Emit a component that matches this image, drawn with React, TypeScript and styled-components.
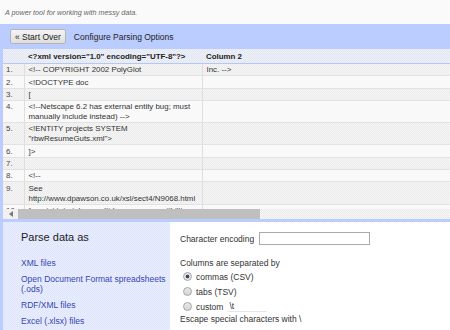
import styled, { createGlobalStyle } from "styled-components";

const rows: [string, string][] = [
  ["<!-- COPYRIGHT 2002 PolyGlot", "Inc. -->"],
  ["<!DOCTYPE doc", ""],
  ["[", ""],
  ["<!--Netscape 6.2 has external entity bug; must manually include instead) -->", ""],
  ['<!ENTITY projects SYSTEM "rbwResumeGuts.xml">', ""],
  ["]>", ""],
  ["", ""],
  ["<!--", ""],
  ["See http://www.dpawson.co.uk/xsl/sect4/N9068.html", ""],
  ["for mini tutorial on multi-browser compatibility", ""],
];

const formats = [
  "XML files",
  "Open Document Format spreadsheets (.ods)",
  "RDF/XML files",
  "Excel (.xlsx) files",
];

const App = () => {
  return (
    <>
      <GlobalStyle />
      <Page>
        <Tagline>A power tool for working with messy data.</Tagline>
        <Frame>
          <Toolbar>
            <Button>« Start Over</Button>
            <ToolbarTitle>Configure Parsing Options</ToolbarTitle>
          </Toolbar>
          <DataView>
            <Table>
              <colgroup>
                <col style={{ width: 21 }} />
                <col style={{ width: 178 }} />
                <col />
              </colgroup>
              <thead>
                <tr>
                  <HeadCell />
                  <HeadCell>{'<?xml version="1.0" encoding="UTF-8"?>'}</HeadCell>
                  <HeadCell>Column 2</HeadCell>
                </tr>
              </thead>
              <tbody>
                {rows.map((r, i) => (
                  <Row key={i} $odd={i % 2 === 0}>
                    <IndexCell>{i + 1}.</IndexCell>
                    <Cell>{r[0]}</Cell>
                    <Cell>{r[1]}</Cell>
                  </Row>
                ))}
              </tbody>
            </Table>
          </DataView>
          <ScrollBar>
            <ScrollArrow>
              <svg width="4" height="6" viewBox="0 0 4 6">
                <path d="M4 0 L0 3 L4 6 Z" fill="#777" />
              </svg>
            </ScrollArrow>
            <ScrollThumb />
            <ScrollTrack />
          </ScrollBar>
          <Options>
            <FormatPanel>
              <PanelTitle>Parse data as</PanelTitle>
              {formats.map((f) => (
                <FormatLink key={f}>{f}</FormatLink>
              ))}
            </FormatPanel>
            <SettingsPanel>
              <FieldRow>
                Character encoding
                <EncodingInput />
              </FieldRow>
              <Label>Columns are separated by</Label>
              <RadioRow>
                <Radio $checked />
                commas (CSV)
              </RadioRow>
              <RadioRow>
                <Radio />
                tabs (TSV)
              </RadioRow>
              <RadioRow>
                <Radio />
                custom
                <SeparatorInput>\t</SeparatorInput>
              </RadioRow>
              <EscapeRow>Escape special characters with \</EscapeRow>
            </SettingsPanel>
          </Options>
        </Frame>
      </Page>
    </>
  );
};

const GlobalStyle = createGlobalStyle`
  body {
    margin: 0;
    background-color: #fafafa;
    font-family: "Liberation Sans", Arial, sans-serif;
  }
`;

const Page = styled.div`
  width: 450px;
  height: 330px;
  overflow: hidden;
  display: flex;
  flex-direction: column;
`;

const Tagline = styled.div`
  flex-shrink: 0;
  height: 24px;
  padding-left: 5px;
  display: flex;
  align-items: center;
  font-size: 7.2px;
  font-style: italic;
  color: #666;
`;

const Frame = styled.div`
  flex: 1;
  min-height: 0;
  display: flex;
  flex-direction: column;
  background-color: #bbccff;
  padding-left: 3px;
`;

const Toolbar = styled.div`
  flex-shrink: 0;
  height: 25px;
  display: flex;
  align-items: center;
  gap: 8px;
  padding-left: 7px;
  font-size: 8.5px;
  color: #222;
`;

const Button = styled.div`
  height: 13px;
  padding: 0 4px;
  display: flex;
  align-items: center;
  background: linear-gradient(#f4f4f4, #dedede);
  border: 1px solid #b5b5b5;
  border-radius: 2px;
  color: #222;
`;

const ToolbarTitle = styled.div``;

const DataView = styled.div`
  flex-shrink: 0;
  height: 160px;
  overflow: hidden;
  background-color: #f9f9f9;
`;

const Table = styled.table`
  width: 100%;
  table-layout: fixed;
  border-collapse: collapse;
  font-size: 7.9px;
  line-height: 10px;
  color: #333;
`;

const HeadCell = styled.th`
  height: 13px;
  padding: 1px 4px 0;
  text-align: left;
  font-weight: bold;
  color: #222;
  white-space: nowrap;
  overflow: hidden;
  background-color: #e6eaf4;
  background-image: repeating-conic-gradient(#e1e6f2 0 25%, #eef1f8 0 50%);
  background-size: 2px 2px;
  border-bottom: 1px solid #b7c7f3;
`;

const Row = styled.tr<{ $odd?: boolean }>`
  background-color: ${(p) => (p.$odd ? "#f0f0f0" : "#f9f9f9")};
  background-image: ${(p) =>
    p.$odd ? "repeating-conic-gradient(#ebebeb 0 25%, #f6f6f6 0 50%)" : "none"};
  background-size: 2px 2px;
`;

const Cell = styled.td`
  padding: 1.3px 4px 0;
  vertical-align: top;
  border-bottom: 1px solid #e2e2e2;
  border-left: 1px solid #dedede;
`;

const IndexCell = styled.td`
  padding: 1.3px 3px 0;
  vertical-align: top;
  color: #444;
  border-bottom: 1px solid #e2e2e2;
`;

const ScrollBar = styled.div`
  flex-shrink: 0;
  height: 10px;
  display: flex;
  background-color: #f3f3f3;
`;

const ScrollArrow = styled.div`
  width: 15px;
  display: flex;
  align-items: center;
  justify-content: center;
  background-color: #f1f1f1;
`;

const ScrollThumb = styled.div`
  width: 242px;
  background-color: #bfbfbf;
`;

const ScrollTrack = styled.div`
  flex: 1;
  background-image: repeating-conic-gradient(#e9e9e9 0 25%, #f8f8f8 0 50%);
  background-size: 2px 2px;
`;

const Options = styled.div`
  flex: 1;
  min-height: 0;
  overflow: hidden;
  margin-top: 3px;
  display: flex;
`;

const FormatPanel = styled.div`
  width: 149px;
  padding: 9px 0 0 18px;
  background-color: #e4e9fd;
  background-image: repeating-conic-gradient(#dfe5fc 0 25%, #e9eeff 0 50%);
  background-size: 2px 2px;
`;

const PanelTitle = styled.div`
  font-size: 11px;
  line-height: 13px;
  color: #222;
  margin-bottom: 14px;
`;

const FormatLink = styled.div`
  font-size: 8.5px;
  line-height: 10px;
  color: #3546b0;
  margin-bottom: 6px;
`;

const SettingsPanel = styled.div`
  flex: 1;
  padding: 10px 0 0 10px;
  background-color: #fff;
  font-size: 8.5px;
  line-height: 10px;
  color: #333;
`;

const FieldRow = styled.div`
  display: flex;
  align-items: center;
  gap: 5px;
  margin-bottom: 13px;
`;

const EncodingInput = styled.div`
  width: 109px;
  height: 11px;
  border: 1px solid #aaa;
  background-color: #fff;
`;

const Label = styled.div`
  margin-bottom: 1px;
`;

const RadioRow = styled.div`
  height: 15px;
  display: flex;
  align-items: center;
  padding-left: 3px;
`;

const Radio = styled.span<{ $checked?: boolean }>`
  width: 7px;
  height: 7px;
  margin-right: 4px;
  border-radius: 50%;
  border: 1px solid #a5a5a5;
  background: ${(p) =>
    p.$checked
      ? "radial-gradient(circle, #444 0 1.6px, #dfe6f2 2.2px)"
      : "linear-gradient(#e9e9e9, #d5d5d5)"};
`;

const SeparatorInput = styled.span`
  width: 38px;
  margin-left: 5px;
  padding-left: 1px;
  border-bottom: 1px solid #e6e6e6;
`;

const EscapeRow = styled.div``;

export default App;
